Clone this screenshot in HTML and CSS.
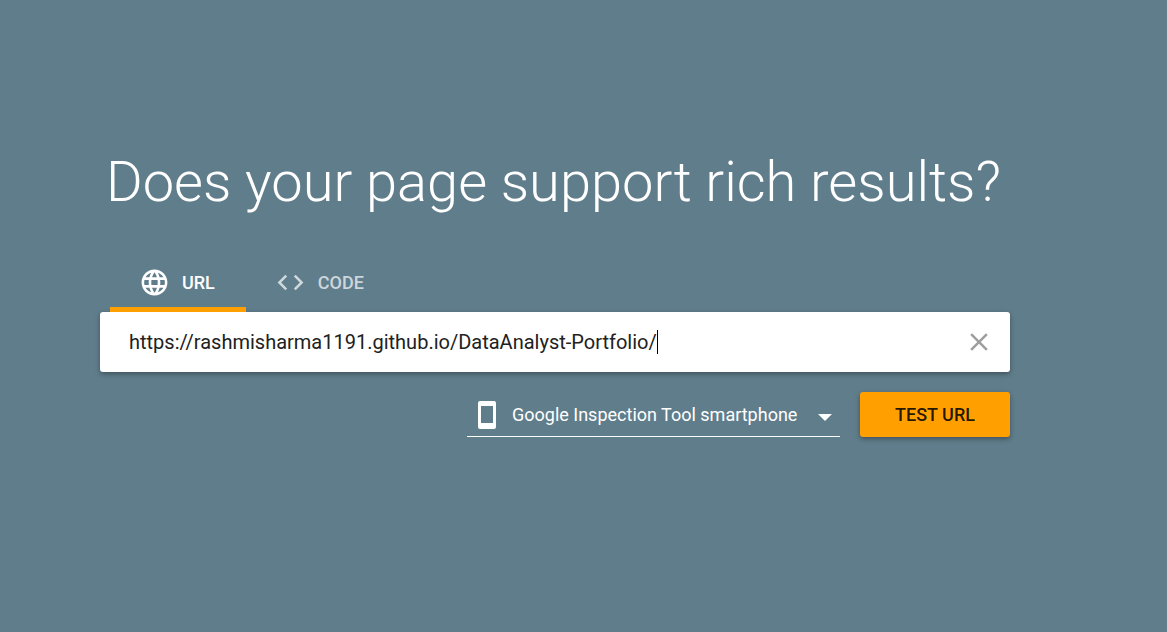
FILE: index.html
```html
<!DOCTYPE html>
<html lang="en">
<head>
<meta charset="utf-8">
<meta name="viewport" content="width=device-width, initial-scale=1">
<title>Rich Results Test</title>
<link rel="stylesheet" href="styles.css">
</head>
<body>
<main class="page">
  <h1 class="title">Does your page support rich results?</h1>
  <div class="tabs" role="tablist">
    <button class="tab tab-active" type="button" role="tab" aria-selected="true">
      <svg class="tab-icon" viewBox="0 0 24 24" aria-hidden="true"><path fill="currentColor" d="M11.99 2C6.47 2 2 6.48 2 12s4.47 10 9.99 10C17.52 22 22 17.52 22 12S17.52 2 11.99 2zm6.93 6h-2.95c-.32-1.25-.78-2.45-1.38-3.56 1.84.63 3.37 1.91 4.33 3.56zM12 4.04c.83 1.2 1.48 2.53 1.91 3.96h-3.82c.43-1.43 1.08-2.76 1.91-3.96zM4.26 14C4.1 13.36 4 12.69 4 12s.1-1.36.26-2h3.38c-.08.66-.14 1.32-.14 2s.06 1.34.14 2H4.26zm.82 2h2.95c.32 1.25.78 2.45 1.38 3.56-1.84-.63-3.37-1.9-4.33-3.56zm2.95-8H5.08c.96-1.66 2.49-2.93 4.33-3.56C8.81 5.55 8.35 6.75 8.03 8zM12 19.96c-.83-1.2-1.48-2.53-1.91-3.96h3.82c-.43 1.43-1.08 2.76-1.91 3.96zM14.34 14H9.66c-.09-.66-.16-1.32-.16-2s.07-1.35.16-2h4.68c.09.65.16 1.32.16 2s-.07 1.34-.16 2zm.25 5.56c.6-1.11 1.06-2.31 1.38-3.56h2.95c-.96 1.65-2.49 2.93-4.33 3.56zM16.36 14c.08-.66.14-1.32.14-2s-.06-1.34-.14-2h3.38c.16.64.26 1.31.26 2s-.1 1.36-.26 2h-3.38z"/></svg>
      URL
    </button>
    <button class="tab" type="button" role="tab" aria-selected="false">
      <svg class="tab-icon" viewBox="0 0 24 24" aria-hidden="true"><path fill="currentColor" d="M9.4 16.6L4.8 12l4.6-4.6L8 6l-6 6 6 6 1.4-1.4zm5.2 0l4.6-4.6-4.6-4.6L16 6l6 6-6 6-1.4-1.4z"/></svg>
      CODE
    </button>
  </div>
  <form class="form">
    <div class="field">
      <div class="entry">
        <input class="url" type="text" aria-label="URL to test" value="https://rashmisharma1191.github.io/DataAnalyst-Portfolio/" spellcheck="false">
        <span class="caret"></span>
      </div>
      <button class="clear" type="button" aria-label="Clear">
        <svg class="clear-icon" viewBox="0 0 24 24" aria-hidden="true"><path fill="currentColor" d="M19 6.41L17.59 5 12 10.59 6.41 5 5 6.41 10.59 12 5 17.59 6.41 19 12 13.41 17.59 19 19 17.59 13.41 12z"/></svg>
      </button>
    </div>
    <div class="actions">
      <div class="agent">
        <svg class="phone" viewBox="0 0 18 28" aria-hidden="true"><path fill="currentColor" fill-rule="evenodd" d="M2 0h14a2 2 0 0 1 2 2v24a2 2 0 0 1-2 2H2a2 2 0 0 1-2-2V2a2 2 0 0 1 2-2zm1 5v17h12V5z"/></svg>
        <select class="agent-select" aria-label="User agent">
          <option>Google Inspection Tool smartphone</option>
          <option>Google Inspection Tool desktop</option>
        </select>
        <svg class="arrow" viewBox="0 0 14 7" aria-hidden="true"><path fill="currentColor" d="M0 0h14L7 7z"/></svg>
      </div>
      <button class="submit" type="submit">TEST URL</button>
    </div>
  </form>
</main>
</body>
</html>
```
FILE: styles.css
```css
* {
  box-sizing: border-box;
}

body {
  margin: 0;
  min-height: 100vh;
  background: #607d8b;
  color: #fff;
  font-family: Roboto, "Liberation Sans", sans-serif;
}

button,
input,
select {
  margin: 0;
  padding: 0;
  border: 0;
  background: none;
  color: inherit;
  font: inherit;
}

button {
  cursor: pointer;
}

.page {
  padding: 150px 157px 40px 100px;
}

.title {
  margin: 0 0 38px;
  padding-left: 6px;
  font-size: 56px;
  line-height: 64px;
  font-weight: 300;
}

.tabs {
  display: flex;
  padding-left: 10px;
}

.tab {
  display: flex;
  align-items: center;
  gap: 12px;
  height: 60px;
  padding: 0 31px 0 29px;
  font-size: 18px;
  font-weight: 500;
  color: rgba(255, 255, 255, 0.7);
}

.tab-active {
  color: #fff;
  box-shadow: inset 0 -5px #ffa000;
}

.tab-icon {
  width: 31px;
  height: 31px;
}

.field {
  display: flex;
  align-items: center;
  justify-content: space-between;
  height: 60px;
  padding: 0 16px 0 29px;
  border-radius: 3px;
  background: #fff;
  color: #212121;
  box-shadow: 0 2px 5px rgba(0, 0, 0, 0.35);
}

.entry {
  display: flex;
  align-items: center;
  min-width: 0;
}

.url {
  field-sizing: content;
  min-width: 0;
  font-size: 20px;
  line-height: 24px;
  outline: none;
  caret-color: transparent;
}

.caret {
  width: 1px;
  height: 24px;
  background: #000;
}

.clear {
  display: flex;
  color: #9e9e9e;
}

.clear-icon {
  width: 30px;
  height: 30px;
}

.actions {
  display: flex;
  justify-content: flex-end;
  gap: 20px;
  margin-top: 20px;
}

.agent {
  display: flex;
  align-items: center;
  width: 373px;
  height: 45px;
  padding: 2px 8px 0 11px;
  border-bottom: 1px solid #fff;
}

.phone {
  width: 18px;
  height: 28px;
  margin-right: 16px;
}

.agent-select {
  flex: 1;
  appearance: none;
  font-size: 18px;
  line-height: 24px;
}

.arrow {
  width: 14px;
  height: 7px;
  margin-top: 4px;
}

.submit {
  width: 150px;
  height: 45px;
  border-radius: 3px;
  background: #ffa000;
  color: rgba(0, 0, 0, 0.87);
  font-size: 18px;
  font-weight: 500;
  box-shadow: 0 2px 5px rgba(0, 0, 0, 0.35);
}
```
